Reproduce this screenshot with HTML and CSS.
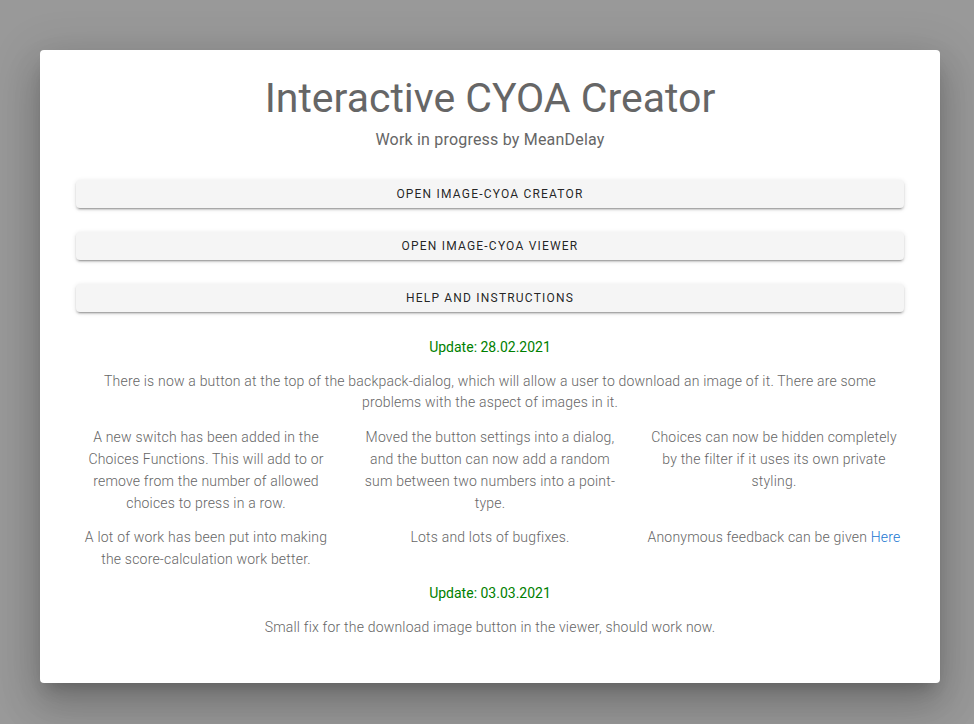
FILE: index.html
```html
<!DOCTYPE html>
<html>
<head>
<meta charset="utf-8">
<link rel="stylesheet" href="styles.css">
</head>
<body>
<div class="card">
  <h1 class="title">Interactive CYOA Creator</h1>
  <p class="subtitle">Work in progress by MeanDelay</p>
  <div class="buttons">
    <button class="btn">Open Image-CYOA Creator</button>
    <button class="btn">Open Image-CYOA Viewer</button>
    <button class="btn">Help and instructions</button>
  </div>
  <div class="update">
    <p class="date">Update: 28.02.2021</p>
    <p class="text">There is now a button at the top of the backpack-dialog, which will allow a user to download an image of it. There are some problems with the aspect of images in it.</p>
    <div class="grid">
      <p class="cell">A new switch has been added in the Choices Functions. This will add to or remove from the number of allowed choices to press in a row.</p>
      <p class="cell">Moved the button settings into a dialog, and the button can now add a random sum between two numbers into a point-type.</p>
      <p class="cell">Choices can now be hidden completely by the filter if it uses its own private styling.</p>
      <p class="cell">A lot of work has been put into making the score-calculation work better.</p>
      <p class="cell">Lots and lots of bugfixes.</p>
      <p class="cell">Anonymous feedback can be given <a class="link" href="#">Here</a></p>
    </div>
    <p class="date">Update: 03.03.2021</p>
    <p class="text">Small fix for the download image button in the viewer, should work now.</p>
  </div>
</div>
</body>
</html>
```

FILE: styles.css
```css
html, body {
  margin: 0;
  padding: 0;
  height: 100%;
}
body {
  background: #999999;
  font-family: Roboto, "Liberation Sans", sans-serif;
  overflow: hidden;
}
.card {
  width: 900px;
  margin: 50px 0 0 40px;
  background: #ffffff;
  border-radius: 4px;
  box-sizing: border-box;
  padding: 24px 36px 45px;
  box-shadow: 0 11px 15px -7px rgba(0,0,0,.2), 0 24px 38px 3px rgba(0,0,0,.14), 0 9px 46px 8px rgba(0,0,0,.12);
  text-align: center;
}
.title {
  margin: 0;
  font-size: 41px;
  font-weight: 400;
  line-height: 48px;
  color: #666666;
}
.subtitle {
  margin: 6px 0 0;
  font-size: 16px;
  letter-spacing: 0.2px;
  line-height: 24px;
  color: #666666;
}
.buttons {
  display: flex;
  flex-direction: column;
  gap: 24px;
  margin-top: 28px;
}
.btn {
  height: 28px;
  border: none;
  border-radius: 4px;
  background: #f5f5f5;
  font-family: Roboto, "Liberation Sans", sans-serif;
  font-size: 12px;
  font-weight: 400;
  letter-spacing: 0.1em;
  text-transform: uppercase;
  color: rgba(0,0,0,.87);
  box-shadow: 0 3px 1px -2px rgba(0,0,0,.2), 0 2px 2px 0 rgba(0,0,0,.14), 0 1px 5px 0 rgba(0,0,0,.12);
  padding: 0;
}
.update {
  margin-top: 24px;
}
.date {
  margin: 0;
  color: #008000;
  font-size: 14px;
  line-height: 22px;
}
.text {
  margin: 13px 0 0;
  padding: 0 12px;
  color: #666666;
  font-weight: 300;
  font-size: 14px;
  letter-spacing: 0.2px;
  line-height: 21px;
}
.grid {
  display: grid;
  grid-template-columns: repeat(3, 1fr);
  row-gap: 12px;
  margin: 13px -12px 12px;
}
.cell {
  margin: 0;
  padding: 0 12px;
  color: #666666;
  font-weight: 300;
  font-size: 14px;
  letter-spacing: 0.2px;
  line-height: 22px;
}
.link {
  color: #1976d2;
  text-decoration: none;
}
```
